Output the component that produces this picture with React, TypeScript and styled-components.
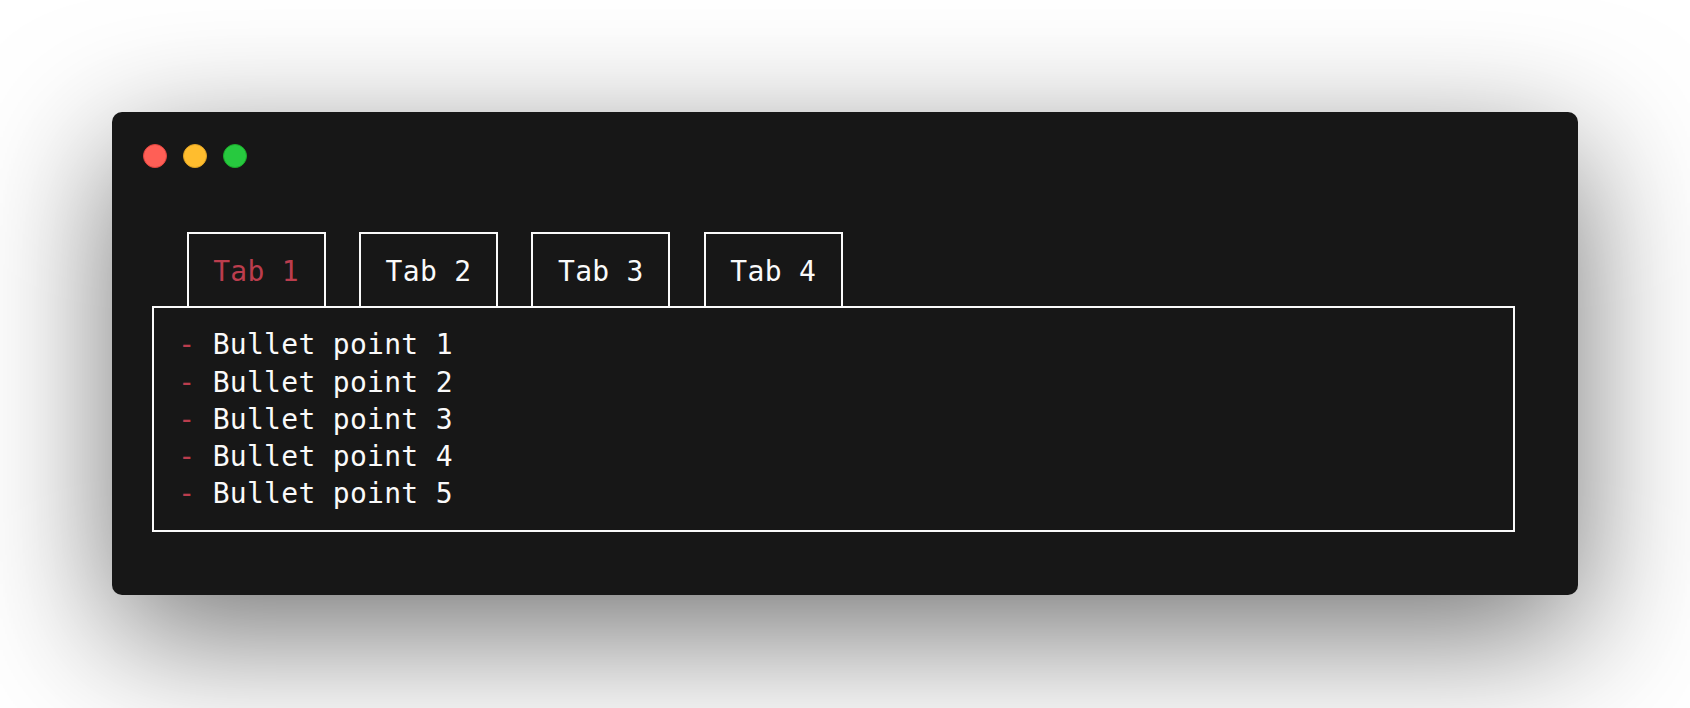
import React from "react";
import styled, { createGlobalStyle } from "styled-components";

const GlobalStyle = createGlobalStyle`
  html, body {
    margin: 0;
    padding: 0;
    background: #ffffff;
  }
  * { box-sizing: border-box; }
`;

const Page = styled.div`
  padding: 112px;
  width: 1690px;
  height: 708px;
  overflow: hidden;
`;

const Window = styled.div`
  width: 1466px;
  height: 483px;
  background: #171717;
  border-radius: 10px;
  box-shadow: 0 40px 136px rgba(0, 0, 0, 0.55);
  padding: 32px 63px 0 40px;
  display: flex;
  flex-direction: column;
  font-family: "DejaVu Sans Mono", "Liberation Mono", monospace;
  font-size: 28px;
  line-height: 37.24px;
  letter-spacing: 0.3px;
  color: #fafafa;
`;

const Controls = styled.div`
  display: flex;
  gap: 16px;
  margin-left: -9px;
  height: 24px;
`;

const Dot = styled.span<{ $fill: string; $edge: string }>`
  width: 24px;
  height: 24px;
  border-radius: 50%;
  background: ${(p) => p.$fill};
  border: 1px solid ${(p) => p.$edge};
`;

const Screen = styled.div`
  margin-top: 64.3px;
  display: flex;
  flex-direction: column;
`;

const TabBar = styled.div`
  display: flex;
  gap: 33.4px;
  padding-left: 34.6px;
`;

const Tab = styled.div<{ $active?: boolean }>`
  width: 139px;
  height: 74.2px;
  border: 2px solid #fafafa;
  border-bottom: none;
  padding-top: 19px;
  text-align: center;
  white-space: pre;
  color: ${(p) => (p.$active ? "#bb3d4d" : "#fafafa")};
`;

const Panel = styled.div`
  border: 2px solid #fafafa;
  padding: 18px 0 17px 24.3px;
  display: flex;
  flex-direction: column;
`;

const Line = styled.div`
  height: 37.24px;
  white-space: pre;
`;

const Bullet = styled.span`
  color: #bb3d4d;
`;

const tabs = ["Tab 1", "Tab 2", "Tab 3", "Tab 4"];
const items = [1, 2, 3, 4, 5].map((n) => `Bullet point ${n}`);

export default function App() {
  return (
    <>
      <GlobalStyle />
      <Page>
        <Window>
          <Controls>
            <Dot $fill="#ff5f56" $edge="#e0443e" />
            <Dot $fill="#ffbd2e" $edge="#dea123" />
            <Dot $fill="#27c93f" $edge="#1aab29" />
          </Controls>
          <Screen>
            <TabBar>
              {tabs.map((t, i) => (
                <Tab key={t} $active={i === 0}>
                  {t}
                </Tab>
              ))}
            </TabBar>
            <Panel>
              {items.map((it) => (
                <Line key={it}>
                  <Bullet>-</Bullet>
                  {" " + it}
                </Line>
              ))}
            </Panel>
          </Screen>
        </Window>
      </Page>
    </>
  );
}
